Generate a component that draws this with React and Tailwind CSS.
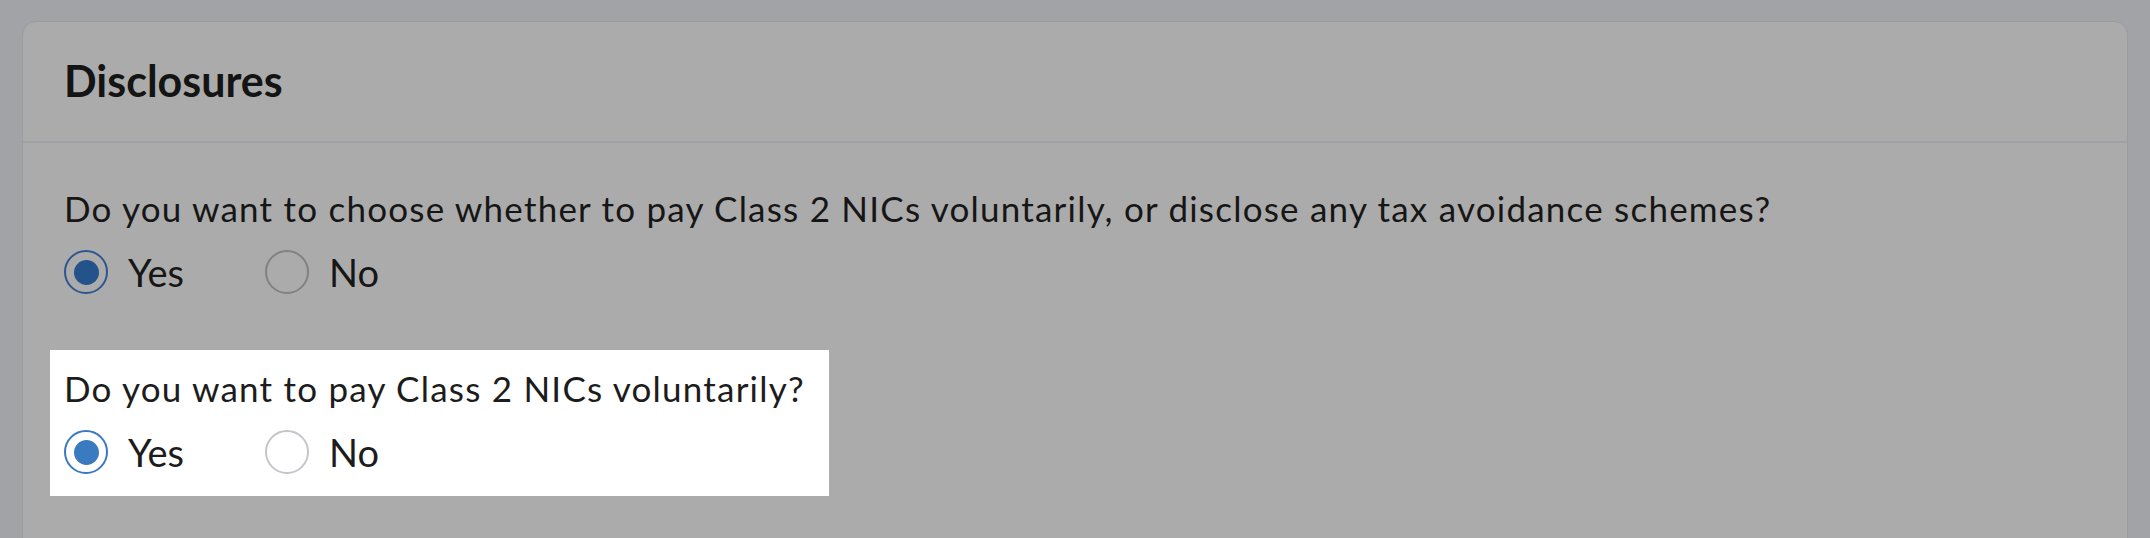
const font = { fontFamily: "Lato, 'Noto Sans', sans-serif" };

const Radio = ({ checked, ring, dot, label, labelColor }) => (
  <label className="flex items-center gap-[20px]">
    <span
      className={`flex h-[44px] w-[44px] items-center justify-center rounded-full border-2 ${ring}`}
    >
      {checked && <span className={`h-[25px] w-[25px] rounded-full ${dot}`} />}
    </span>
    <span className={`text-[38px] leading-[44px] ${labelColor}`}>{label}</span>
  </label>
);

const Question = ({ text, highlight }) => (
  <div
    className={`w-fit pl-[14px] pr-[24px] pt-[16px] pb-[22px] ${
      highlight ? "bg-white" : ""
    }`}
  >
    <p
      className={`text-[35px] leading-[44px] tracking-[1.22px] ${
        highlight ? "text-[#1c1c1c]" : "text-[#161616]"
      }`}
    >
      {text}
    </p>
    <div className="mt-[20px] flex items-center gap-[81px]">
      {highlight ? (
        <>
          <Radio
            checked
            ring="border-[#3a78c1]"
            dot="bg-[#3a7bbf]"
            label="Yes"
            labelColor="text-[#1c1c1c]"
          />
          <Radio ring="border-[#c3c6cb]" label="No" labelColor="text-[#1c1c1c]" />
        </>
      ) : (
        <>
          <Radio
            checked
            ring="border-[#2b568f]"
            dot="bg-[#24528a]"
            label="Yes"
            labelColor="text-[#161616]"
          />
          <Radio ring="border-[#7f8185]" label="No" labelColor="text-[#161616]" />
        </>
      )}
    </div>
  </div>
);

export default function App() {
  return (
    <div
      className="h-[538px] overflow-hidden bg-[#a1a3a7] px-[22px] pt-[21px]"
      style={font}
    >
      <div className="h-[600px] rounded-t-[14px] border border-[#9a9ca0] bg-[#ababab]">
        {/* HEADER */}
        <div className="flex h-[121px] items-center border-b-2 border-[#9fa1a5] px-[41px]">
          <h2 className="text-[43px] font-bold text-[#141414]">Disclosures</h2>
        </div>

        {/* QUESTIONS */}
        <div className="flex flex-col gap-[34px] px-[27px] pt-[27px]">
          <Question text="Do you want to choose whether to pay Class 2 NICs voluntarily, or disclose any tax avoidance schemes?" />
          <Question text="Do you want to pay Class 2 NICs voluntarily?" highlight />
        </div>
      </div>
    </div>
  );
}
